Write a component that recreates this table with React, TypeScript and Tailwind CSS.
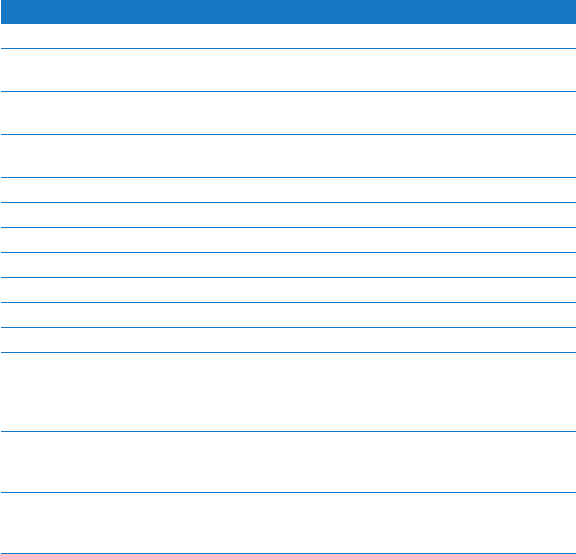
export default function App() {
  const rows = [25, 43, 43, 43, 25, 25, 25, 25, 25, 25, 25, 79, 61, 61];
  const heights: Record<number, string> = {
    25: "h-[25px]",
    43: "h-[43px]",
    61: "h-[61px]",
    79: "h-[79px]",
  };

  return (
    <div className="min-h-[554px] bg-white pl-px font-['Liberation_Sans',sans-serif]">
      <div className="flex flex-col">
        {/* header bar */}
        <div className="h-6 bg-[#1677c5]" />
        {rows.map((h, i) => (
          <div key={i} className={`${heights[h]} border-b border-[#1677c5]`} />
        ))}
      </div>
    </div>
  );
}
